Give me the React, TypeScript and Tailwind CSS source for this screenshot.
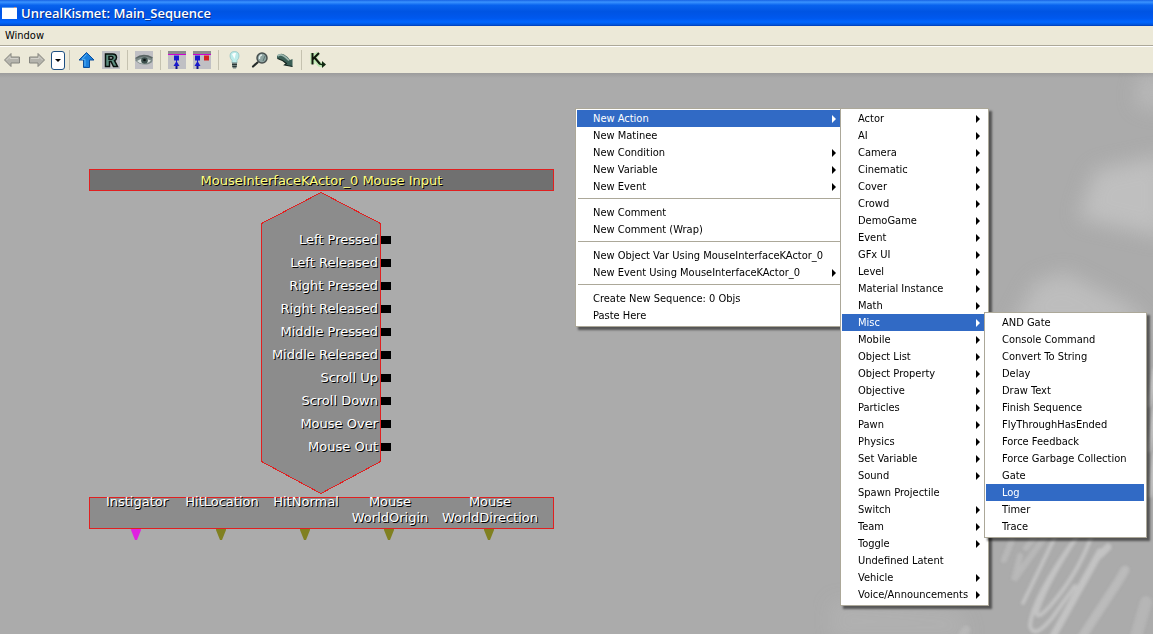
import type { ReactNode } from "react";
import { clsx } from "clsx";

type Item = { label: string; sub?: boolean; active?: boolean } | null;

const mainMenu: Item[] = [
  { label: "New Action", sub: true, active: true },
  { label: "New Matinee" },
  { label: "New Condition", sub: true },
  { label: "New Variable", sub: true },
  { label: "New Event", sub: true },
  null,
  { label: "New Comment" },
  { label: "New Comment (Wrap)" },
  null,
  { label: "New Object Var Using MouseInterfaceKActor_0" },
  { label: "New Event Using MouseInterfaceKActor_0", sub: true },
  null,
  { label: "Create New Sequence: 0 Objs" },
  { label: "Paste Here" },
];

const leafActions = ["Spawn Projectile", "Undefined Latent"];
const actionMenu: Item[] = [
  "Actor", "AI", "Camera", "Cinematic", "Cover", "Crowd", "DemoGame", "Event", "GFx UI", "Level",
  "Material Instance", "Math", "Misc", "Mobile", "Object List", "Object Property", "Objective",
  "Particles", "Pawn", "Physics", "Set Variable", "Sound", "Spawn Projectile", "Switch", "Team",
  "Toggle", "Undefined Latent", "Vehicle", "Voice/Announcements",
].map((label) => ({ label, sub: !leafActions.includes(label), active: label === "Misc" }));

const miscMenu: Item[] = [
  "AND Gate", "Console Command", "Convert To String", "Delay", "Draw Text", "Finish Sequence",
  "FlyThroughHasEnded", "Force Feedback", "Force Garbage Collection", "Gate", "Log", "Timer", "Trace",
].map((label) => ({ label, active: label === "Log" }));

const outputs = [
  "Left Pressed", "Left Released", "Right Pressed", "Right Released", "Middle Pressed",
  "Middle Released", "Scroll Up", "Scroll Down", "Mouse Over", "Mouse Out",
];

const variables = [
  { lines: ["Instigator"], color: "#e020e0" },
  { lines: ["HitLocation"], color: "#808020" },
  { lines: ["HitNormal"], color: "#808020" },
  { lines: ["Mouse", "WorldOrigin"], color: "#808020" },
  { lines: ["Mouse", "WorldDirection"], color: "#808020" },
];

function Menu({ items, label, className }: { items: Item[]; label: string; className: string }) {
  return (
    <ul
      role="menu"
      aria-label={label}
      className={clsx(
        "absolute border border-[#aca899] bg-white pt-px pr-0.5 pb-0.5 pl-px text-[11px] shadow-[3px_3px_2px_rgba(0,0,0,0.5)]",
        className,
      )}
    >
      {items.map((item, i) =>
        item ? (
          <li key={item.label} role="none">
            <button
              type="button"
              role="menuitem"
              aria-haspopup={item.sub ? "menu" : undefined}
              className={clsx(
                "flex h-[17px] w-full items-center justify-between pr-1.5 pl-4 text-left leading-4 whitespace-nowrap",
                item.active ? "bg-[#316ac5] text-white" : "text-black",
              )}
            >
              {item.label}
              {item.sub && (
                <svg width="4" height="8" viewBox="0 0 4 8" fill="currentColor" aria-hidden="true">
                  <path d="M0 0L4 4L0 8Z" />
                </svg>
              )}
            </button>
          </li>
        ) : (
          <li key={i} role="separator" className="h-[9px] pt-[3px] pl-px">
            <span className="block h-px w-full bg-[#aca899]" />
          </li>
        ),
      )}
    </ul>
  );
}

function Tool({ label, shaded, children }: { label: string; shaded?: boolean; children: ReactNode }) {
  return (
    <button type="button" aria-label={label} className={clsx("h-[18px] w-[18px] shrink-0", shaded && "bg-[#c0c0c4]")}>
      <svg width="18" height="18" viewBox="0 0 18 18" aria-hidden="true">
        {children}
      </svg>
    </button>
  );
}

const Divider = () => <span className="h-5 w-px shrink-0 bg-[#c5c2b0]" />;

function Toolbar() {
  return (
    <div role="toolbar" aria-label="Sequence tools" className="flex h-[27px] shrink-0 items-center border-t border-white bg-[#ece9d8] pl-[3px]">
      <div className="flex items-center gap-[7px]">
        <Tool label="Back">
          <path d="M1.5 9L8 2.5V6H16.500V12H8V15.500Z" fill="#b4b3ac" stroke="#85857f" />
          <path d="M3.500 9L7 5.500V7.500H15" fill="none" stroke="#d2d1ca" />
        </Tool>
        <Tool label="Forward">
          <path d="M16.500 9L10 2.500V6H1.500V12H10V15.500Z" fill="#b4b3ac" stroke="#85857f" />
          <path d="M14.500 9L11 5.500V7.500H3" fill="none" stroke="#d2d1ca" />
        </Tool>
      </div>
      <button type="button" aria-label="History" className="ml-[5px] flex h-[19px] w-[14px] items-center justify-center rounded-[3px] border border-[#1c4f82] bg-white">
        <svg width="6" height="3" viewBox="0 0 6 3" aria-hidden="true">
          <path d="M0 0H6L3 3Z" fill="#000" />
        </svg>
      </button>
      <div className="ml-1 flex items-center gap-[7px]">
        <Divider />
        <Tool label="Parent sequence">
          <path d="M9.500 1.500L17 9H12.500V16.500H6.500V9H2Z" fill="#1c80dc" stroke="#0b4f9c" />
          <path d="M9.500 3.500L5 8.300H8V15" fill="none" stroke="#5ab4f6" />
        </Tool>
        <Tool label="Rename sequence" shaded>
          <path d="M3.500 15.500V3H10.500Q14.500 3 14.500 6.500Q14.500 8.800 12.500 9.700L15.500 15.500H11.500L9 10.500H7.500V15.500ZM7 5.500V8.200H9.700Q11 8.200 11 6.800Q11 5.500 9.700 5.500Z" fill="#5d8d7f" stroke="#07100d" strokeWidth="1.500" fillRule="evenodd" />
        </Tool>
        <Divider />
        <Tool label="Hide connectors" shaded>
          <path d="M0 9Q6 2 17 7Q19 11 14 13Q5 15 0 9Z" fill="#7d8b89" />
          <path d="M0.500 7.500Q8 2 17.500 7" fill="none" stroke="#5a6664" strokeWidth="1.500" />
          <path d="M2 10Q8 6 16 9.500Q13 13 7 12.500Q4 12 2 10Z" fill="#dce3df" />
          <circle cx="9.500" cy="9.500" r="3.300" fill="#3d514e" />
          <circle cx="9.500" cy="9" r="1.300" fill="#0a1211" />
        </Tool>
        <Divider />
        <Tool label="Show all connectors" shaded>
          <path d="M0 0H18V3H0Z" fill="#8b8b8d" />
          <path d="M0 3.500H18" stroke="#d000d0" />
          <path d="M6 4.500H11V9.500H6ZM8 9H9V18H8Z" fill="#1a1acc" />
          <path d="M8.500 10L11.500 15H5.500Z" fill="#1a1acc" />
          <path d="M7.500 15H9.500V18H7.500Z" fill="#10108c" />
        </Tool>
        <Tool label="Hide unused connectors" shaded>
          <path d="M0 0H18V3H0Z" fill="#8b8b8d" />
          <path d="M0 3.500H18" stroke="#d000d0" />
          <path d="M2 4.500H7V9.500H2ZM4 9H5V18H4Z" fill="#1a1acc" />
          <path d="M4.500 10L7.500 15H1.500Z" fill="#1a1acc" />
          <path d="M3.500 15H5.500V18H3.500Z" fill="#10108c" />
          <path d="M11 4.500H16V9.500H11Z" fill="#d42020" />
        </Tool>
        <Divider />
        <Tool label="Toggle hints">
          <path d="M4 5Q4 0.500 8.500 0.500Q13 0.500 13 5Q13 7.500 11 9.500V12H6V9.500Q4 7.500 4 5Z" fill="#bdecea" stroke="#8dbfc0" strokeWidth="0.700" />
          <path d="M6 3Q8 1.500 10 2L8.500 8Z" fill="#fafffe" />
          <path d="M6 11.500H11V15.500L10 17.500H7L6 15.500Z" fill="#72817f" />
          <path d="M6 13.500H11M6.500 15.500H10.500" stroke="#2c3735" />
        </Tool>
        <Tool label="Search">
          <path d="M6.500 11.500L2 15.500" stroke="#252b29" strokeWidth="2.200" strokeLinecap="round" />
          <circle cx="11" cy="7" r="5" fill="#8fa5a2" stroke="#48504f" strokeWidth="1.500" />
          <path d="M8.500 8Q8 4.500 11 4" fill="none" stroke="#e1ecea" strokeWidth="1.300" />
          <path d="M12 10L14 5" stroke="#5c7773" />
        </Tool>
        <Tool label="Update">
          <path d="M1 5Q4 1.500 8 3.500Q12.500 6 14 9L16.500 8V15.500L8.500 14L10 12.500Q6.500 8.500 1 7.500Z" fill="#3b5f56" />
          <path d="M1.500 5Q5.500 1.500 13 9.500" fill="none" stroke="#9db7af" strokeWidth="1.800" />
          <path d="M1.500 7.500Q7 9 10.500 12.500L8.500 14L16.500 15.500" fill="none" stroke="#13241f" strokeWidth="1.100" />
        </Tool>
        <Divider />
        <Tool label="Open Kismet">
          <path d="M3.500 2V13M4 8L9.500 2M5.500 7L10.500 13.500L14 14" fill="none" stroke="#a9eaa4" strokeWidth="4.500" opacity="0.700" />
          <path d="M3.500 2V13.500M3.500 8.500L10 2M5.500 6.500L11 13" fill="none" stroke="#10180c" strokeWidth="2" />
          <path d="M10 12Q11 14 14 13.500" fill="none" stroke="#102810" strokeWidth="1.500" />
          <path d="M13 10L17 13.500L13 17Z" fill="#102810" />
        </Tool>
      </div>
    </div>
  );
}

/* Blurred scribbles that lie behind the graph at the right of the canvas. */
function Backdrop() {
  return (
    <svg className="pointer-events-none absolute top-0 right-0" width="340" height="561" viewBox="813 73 340 561" aria-hidden="true">
      <defs>
        <filter id="haze" x="-40%" y="-40%" width="180%" height="180%"><feGaussianBlur stdDeviation="10" /></filter>
        <filter id="soft" x="-20%" y="-20%" width="140%" height="140%"><feGaussianBlur stdDeviation="1.500" /></filter>
      </defs>
      <g filter="url(#haze)" fill="#cdcdcd" opacity="0.600">
        <path d="M1095 170L1165 155V238L1078 218Z" />
        <path d="M1140 75H1165V112L1135 105Z" opacity="0.700" />
        <path d="M1035 282L1065 272L1130 305L1153 330H1010Z" opacity="0.900" />
        <path d="M830 600L960 610L970 640H830Z" opacity="0.300" />
      </g>
      <g filter="url(#soft)" fill="none" stroke="#c8c8c8" strokeLinecap="round" opacity="0.850">
        <path d="M1046 535L1014 580L1020 556M1036 535L1026 548M1012 540L1004 560" strokeWidth="6" opacity="0.550" />
        <path d="M1056 535L1023 603" strokeWidth="4" />
        <path d="M1092 535Q1078 574 1050 606Q1036 622 1037 611Q1048 580 1078 535" strokeWidth="4" />
        <path d="M1078 535Q1032 598 1030 626Q1034 640 1052 618L1075 586" strokeWidth="4" />
        <path d="M1108 547L1100 555M1100 552L1052 638" strokeWidth="7" />
        <path d="M1125 570L1118 582L1080 640" strokeWidth="9" opacity="0.650" />
        <path d="M1146 602L1135 640" strokeWidth="12" opacity="0.450" />
        <path d="M1155 370L1149 405M1155 410L1149 450M1155 455L1150 495" strokeWidth="5" />
        <path d="M966 630L960 640" strokeWidth="9" opacity="0.450" />
      </g>
    </svg>
  );
}

const nodeText = "text-[13px] leading-4 whitespace-nowrap [text-shadow:1px_1px_0_#000]";

function EventNode() {
  return (
    <section aria-label="Mouse input event" className={clsx("absolute top-24 left-[89px] w-[465px] font-['Verdana','DejaVu_Sans',sans-serif] text-white", nodeText)}>
      <h2 className="flex h-[22px] items-center justify-center border border-[#e02020] bg-[#707070] pt-0.5 text-[#ffff80]">
        MouseInterfaceKActor_0 Mouse Input
      </h2>
      <div className="relative mx-auto mt-px h-[302px] w-[121px]">
        <svg className="absolute inset-0" width="121" height="302" viewBox="0 0 121 302" aria-hidden="true">
          <path d="M60 0.500L119.500 31.500V269.500L60 301.500L0.500 269.500V31.500Z" fill="#8c8c8c" stroke="#e02020" shapeRendering="crispEdges" />
        </svg>
        <ul className="relative pt-9">
          {outputs.map((name) => (
            <li key={name} className="-mr-[9px] flex h-[23px] items-center justify-end gap-[3px]">
              {name}
              <span className="h-2 w-2.5 bg-black" />
            </li>
          ))}
        </ul>
      </div>
      <ul className="mt-[3px] grid h-8 grid-cols-[94px_76px_92px_76px_124px] border border-[#e02020] bg-[#8c8c8c]">
        {variables.map(({ lines, color }) => (
          <li key={lines.join(" ")} className="relative flex flex-col items-center">
            <span className="-mt-1 flex flex-col items-center">
              {lines.map((line) => (
                <span key={line}>{line}</span>
              ))}
            </span>
            <svg className="absolute top-[31px]" width="12" height="11" viewBox="0 0 12 11" aria-hidden="true">
              <path d="M0 0H10V1L6 11H4L0 1Z" fill={color} />
            </svg>
          </li>
        ))}
      </ul>
    </section>
  );
}

export default function App() {
  return (
    <div className="flex h-screen flex-col overflow-hidden bg-[#ababab] font-['Tahoma','DejaVu_Sans_Condensed',sans-serif]">
      <header className="flex h-[26px] shrink-0 items-center gap-1 bg-[linear-gradient(#1763e4_0%,#3a93ff_8%,#0863ee_20%,#0054e3_45%,#0058ee_70%,#0066ff_85%,#0057df_94%,#003bb5_100%)] pl-0.5">
        <svg width="15" height="12" viewBox="0 0 15 12" aria-hidden="true">
          <path d="M0 0H15V12H0Z" fill="#fff" />
          <path d="M0 0H15V1H0Z" fill="#5a9bea" />
          <path d="M12 0H14V1H12Z" fill="#e99166" />
        </svg>
        <h1 className="font-['Trebuchet_MS','Open_Sans',sans-serif] text-[13px] leading-4 font-semibold text-white [text-shadow:1px_1px_0_#0a2f88]">
          UnrealKismet: Main_Sequence
        </h1>
      </header>
      <nav aria-label="Menu bar" className="flex h-5 shrink-0 items-center border-b border-[#aca899] bg-[#ece9d8] pl-[5px]">
        <button type="button" className="text-[11px] leading-4 text-black">Window</button>
      </nav>
      <Toolbar />
      <main className="relative min-h-0 flex-1 overflow-hidden bg-[linear-gradient(#9c9c9c,#ababab_5px)]">
        <Backdrop />
        <EventNode />
        <Menu items={mainMenu} label="New object" className="top-[35px] left-[575px] w-[270px]" />
        <Menu items={actionMenu} label="New action" className="top-[35px] left-[840px] w-[149px]" />
        <Menu items={miscMenu} label="Misc" className="top-[239px] left-[984px] w-[163px]" />
      </main>
    </div>
  );
}
